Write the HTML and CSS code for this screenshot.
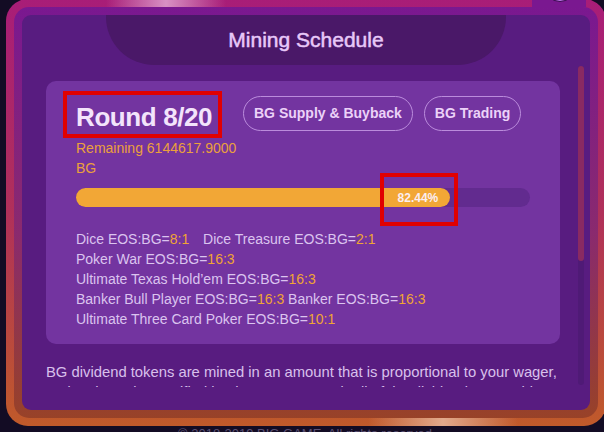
FILE: index.html
```html
<!DOCTYPE html>
<html lang="en">
  <head>
    <meta charset="UTF-8" />
    <meta name="viewport" content="width=device-width, initial-scale=1.0" />
    <title>Mining Schedule</title>
    <link rel="stylesheet" href="styles.css">
  </head>
  <body>
    <div class="frame">
      <div class="ring">
        <div class="panel">
          <div class="head">Mining Schedule</div>

          <div class="body">
            <div class="scroll">
              <div class="card">
                <div class="top">
                  <div class="round-info">
                    <h2 class="round">Round 8/20</h2>
                    <p class="remain">Remaining 6144617.9000 BG</p>
                  </div>
                  <div class="links">
                    <a class="pill" href="#">BG Supply &amp; Buyback</a>
                    <a class="pill" href="#">BG Trading</a>
                  </div>
                </div>

                <div class="bar">
                  <div class="fill" style="width: 82.44%">
                    <span class="pct">82.44%</span>
                  </div>
                </div>

                <ul class="rates">
                  <li><span class="gap">Dice EOS:BG=<em>8:1</em></span> Dice Treasure EOS:BG=<em>2:1</em></li>
                  <li>Poker War EOS:BG=<em>16:3</em></li>
                  <li>Ultimate Texas Hold’em EOS:BG=<em>16:3</em></li>
                  <li>Banker Bull Player EOS:BG=<em>16:3</em> Banker EOS:BG=<em>16:3</em></li>
                  <li>Ultimate Three Card Poker EOS:BG=<em>10:1</em></li>
                </ul>
              </div>

              <p class="intro">
                BG dividend tokens are mined in an amount that is proportional to your wager,
                and at the ratio specified by the current round. All of the dividends are paid out in EOS.
              </p>
            </div>

            <div class="scrollbar"><div class="thumb"></div></div>
          </div>
        </div>
      </div>
      <span class="close"></span>
    </div>

    <div class="copy">© 2018-2019 BIG GAME. All rights reserved</div>
  </body>
</html>
```

FILE: styles.css
```css
html,
body {
  margin: 0;
  height: 100%;
  overflow: hidden;
}

body {
  font-family: 'Liberation Sans', Arial, sans-serif;
  background-color: #130c24;
}

/* window frame: pink->orange border, purple->brown ring, panel */
.frame {
  position: relative;
  width: 600px;
  margin: -1px 0 0 6px;
  padding: 8px;
  box-sizing: border-box;
  border-radius: 22px;
  background: linear-gradient(180deg, #a81d78 0%, #b0305a 50%, #c05a2a 100%);
}

.frame::before,
.frame::after {
  content: '';
  position: absolute;
  height: 8px;
}

.frame::before {
  top: 0;
  left: 100px;
  width: 120px;
  background: linear-gradient(90deg, rgba(230, 160, 210, 0), #d890c4 50%, rgba(230, 160, 210, 0));
}

.frame::after {
  bottom: 0;
  left: 362px;
  width: 150px;
  background: linear-gradient(90deg, rgba(230, 170, 140, 0), #e2aa8c 50%, rgba(230, 170, 140, 0));
}

.ring {
  padding: 8px;
  border-radius: 15px;
  background: linear-gradient(180deg, #7a1890 0%, #8a2a6e 55%, #984228 100%);
}

.panel {
  height: 395px;
  border-radius: 9px;
  background-color: #581c80;
  overflow: hidden;
}

.close {
  position: absolute;
  top: 0;
  right: 20px;
  width: 54px;
  height: 8px;
  background-color: #7a1890;
}

.close::after {
  content: '';
  position: absolute;
  top: -29px;
  left: 12px;
  width: 30px;
  height: 30px;
  border-radius: 50%;
  border: 1px solid #3a0c4e;
  background-color: #c274ee;
}

.head {
  width: 400px;
  height: 50px;
  margin: 0 auto;
  border-radius: 0 0 48px 48px;
  background-color: #4a1868;
  color: #e8c8f8;
  font-size: 21px;
  line-height: 50px;
  text-align: center;
  -webkit-text-stroke: 0.5px #e8c8f8;
}

.body {
  display: flex;
  height: 322px;
}

.scroll {
  flex: 1;
  padding: 16px 18px 0 24px;
  overflow: hidden;
}

.scrollbar {
  width: 6px;
  height: 319px;
  margin: 1px 6px 0 0;
  border-radius: 3px;
  background-color: #4f1a76;
}

.thumb {
  height: 195px;
  border-radius: 3px;
  background-color: #892a62;
}

.card {
  padding: 15px 30px;
  border-radius: 10px;
  background-color: #7334a0;
}

.top {
  display: flex;
  align-items: flex-start;
}

.round-info {
  width: 167px;
}

.round {
  position: relative;
  display: inline-block;
  margin: 0;
  font-size: 26px;
  letter-spacing: -0.4px;
  line-height: 42px;
  color: #f3e4fb;
}

/* annotation box */
.round::after {
  content: '';
  position: absolute;
  top: -5px;
  bottom: 0;
  left: -13px;
  right: -10px;
  border: 4px solid #e10000;
}

.remain {
  margin: 0;
  font-size: 14px;
  line-height: 20px;
  color: #eba03c;
}

.links {
  display: flex;
  gap: 11px;
}

.pill {
  display: block;
  height: 35px;
  padding: 0 10px;
  box-sizing: border-box;
  border: 1px solid #bb8cdc;
  border-radius: 18px;
  color: #ecd2f8;
  font-size: 14px;
  font-weight: bold;
  line-height: 33px;
  text-decoration: none;
  white-space: nowrap;
}

.bar {
  width: 454px;
  height: 19px;
  margin-top: 10px;
  border-radius: 10px;
  background-color: #622b8f;
}

.fill {
  position: relative;
  height: 100%;
  border-radius: 10px;
  background-color: #f2a736;
  text-align: right;
}

.fill::after {
  content: '';
  position: absolute;
  top: -15px;
  bottom: -19px;
  right: -8px;
  width: 78px;
  box-sizing: border-box;
  border: 4px solid #e10000;
}

.pct {
  display: inline-block;
  padding-right: 12px;
  color: #fbeef2;
  font-size: 12px;
  font-weight: bold;
  line-height: 19px;
}

.rates {
  list-style: none;
  margin: 22px 0 0;
  padding: 0;
  font-size: 14px;
  line-height: 20px;
  color: #dbc4ef;
}

.rates em {
  font-style: normal;
  color: #f0a434;
}

.rates .gap {
  margin-right: 10px;
}

.intro {
  margin: 18px -12px 0 0;
  font-size: 14.8px;
  line-height: 20px;
  color: #d8c0ec;
}

.copy {
  color: #5c5274;
  font-size: 13px;
  line-height: 16px;
  text-align: center;
  padding-left: 6px;
}
```
